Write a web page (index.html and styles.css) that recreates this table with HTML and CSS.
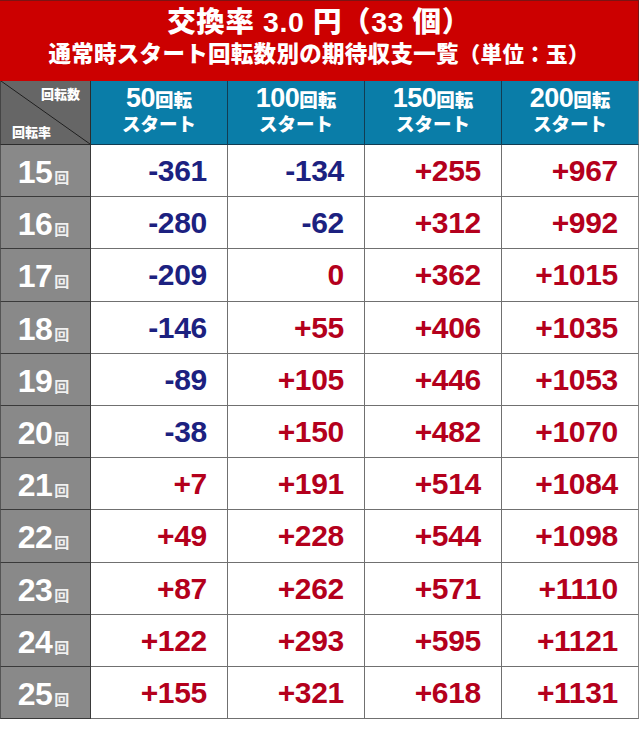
FILE: index.html
```html
<!DOCTYPE html>
<html lang="ja">
<head>
<meta charset="utf-8">
<link rel="stylesheet" href="styles.css">
</head>
<body>
<div class="board">
  <div class="title">
    <div class="t1">交換率 3.0 円（33 個）</div>
    <div class="t2">通常時スタート回転数別の期待収支一覧<span class="unit">（単位：玉）</span></div>
  </div>
  <div class="grid">
    <div class="corner"><span class="c-top">回転数</span><span class="c-bot">回転率</span></div>
    <div class="hcell"><div><span class="hn">50</span>回転</div><div>スタート</div></div>
    <div class="hcell"><div><span class="hn">100</span>回転</div><div>スタート</div></div>
    <div class="hcell"><div><span class="hn">150</span>回転</div><div>スタート</div></div>
    <div class="hcell last"><div><span class="hn">200</span>回転</div><div>スタート</div></div>

    <div class="rh"><span class="rn">15</span><span class="kai">回</span></div>
    <div class="dc neg">-361</div><div class="dc neg">-134</div><div class="dc pos">+255</div><div class="dc pos last">+967</div>

    <div class="rh"><span class="rn">16</span><span class="kai">回</span></div>
    <div class="dc neg">-280</div><div class="dc neg">-62</div><div class="dc pos">+312</div><div class="dc pos last">+992</div>

    <div class="rh"><span class="rn">17</span><span class="kai">回</span></div>
    <div class="dc neg">-209</div><div class="dc pos">0</div><div class="dc pos">+362</div><div class="dc pos last">+1015</div>

    <div class="rh"><span class="rn">18</span><span class="kai">回</span></div>
    <div class="dc neg">-146</div><div class="dc pos">+55</div><div class="dc pos">+406</div><div class="dc pos last">+1035</div>

    <div class="rh"><span class="rn">19</span><span class="kai">回</span></div>
    <div class="dc neg">-89</div><div class="dc pos">+105</div><div class="dc pos">+446</div><div class="dc pos last">+1053</div>

    <div class="rh"><span class="rn">20</span><span class="kai">回</span></div>
    <div class="dc neg">-38</div><div class="dc pos">+150</div><div class="dc pos">+482</div><div class="dc pos last">+1070</div>

    <div class="rh"><span class="rn">21</span><span class="kai">回</span></div>
    <div class="dc pos">+7</div><div class="dc pos">+191</div><div class="dc pos">+514</div><div class="dc pos last">+1084</div>

    <div class="rh"><span class="rn">22</span><span class="kai">回</span></div>
    <div class="dc pos">+49</div><div class="dc pos">+228</div><div class="dc pos">+544</div><div class="dc pos last">+1098</div>

    <div class="rh"><span class="rn">23</span><span class="kai">回</span></div>
    <div class="dc pos">+87</div><div class="dc pos">+262</div><div class="dc pos">+571</div><div class="dc pos last">+1110</div>

    <div class="rh"><span class="rn">24</span><span class="kai">回</span></div>
    <div class="dc pos">+122</div><div class="dc pos">+293</div><div class="dc pos">+595</div><div class="dc pos last">+1121</div>

    <div class="rh"><span class="rn">25</span><span class="kai">回</span></div>
    <div class="dc pos">+155</div><div class="dc pos">+321</div><div class="dc pos">+618</div><div class="dc pos last">+1131</div>
  </div>
</div>
</body>
</html>
```

FILE: styles.css
```css
html, body {
  margin: 0;
  padding: 0;
  background: #ffffff;
}
body {
  font-family: "Liberation Sans", "Noto Sans CJK JP", sans-serif;
  font-weight: 700;
}
.board {
  width: 640px;
}
.title {
  height: 81px;
  box-sizing: border-box;
  width: 639px;
  background: #cc0000;
  border-top: 1px solid #7a1414;
  border-right: 1px solid #7a1414;
  color: #ffffff;
  text-align: center;
  padding-top: 4px;
  font-weight: 900;
}
.t1 {
  font-size: 28.5px;
  line-height: 35px;
  letter-spacing: 0.6px;
}
.t2 {
  font-size: 22.5px;
  line-height: 30px;
  letter-spacing: 0.3px;
}
.unit {
  font-size: 21.5px;
}
.grid {
  display: grid;
  grid-template-columns: 91px 137px 137px 137px 137px;
  grid-template-rows: 64px repeat(11, 52.2px);
  width: 639px;
}
.grid > div {
  box-sizing: border-box;
}
.corner {
  background: linear-gradient(to top right, #666666 calc(50% - 0.8px), #1e1e1e 50%, #666666 calc(50% + 0.8px));
  border-right: 1px solid #2c2c2c;
  border-bottom: 1px solid #2c2c2c;
  border-left: 1px solid #444444;
  color: #ffffff;
  font-family: "Noto Sans CJK JP", sans-serif;
  font-weight: 900;
  font-size: 13px;
  line-height: 16px;
  display: flex;
  flex-direction: column;
  justify-content: space-between;
  padding: 5px 10px 4px 11px;
}
.c-top { align-self: flex-end; }
.c-bot { align-self: flex-start; }
.hcell {
  background: #0a7da8;
  border-right: 1px solid #123c52;
  border-bottom: 1px solid #123c52;
  color: #ffffff;
  font-family: "Liberation Sans", "Noto Sans CJK JP", sans-serif;
  font-weight: 900;
  font-size: 18.5px;
  line-height: 24px;
  text-align: center;
  display: flex;
  flex-direction: column;
  justify-content: center;
  padding-bottom: 2px;
}
.hcell .hn {
  font-size: 27px;
  font-weight: 700;
  letter-spacing: -0.5px;
}
.hcell.last {
  border-right: 1px solid #6a7c86;
}
.rh {
  background: #898989;
  border-right: 1px solid #3a3a3a;
  border-bottom: 1px solid #3a3a3a;
  border-left: 1px solid #555555;
  color: #ffffff;
  display: flex;
  align-items: baseline;
  justify-content: center;
  padding-top: 9px;
  padding-right: 4px;
}
.rn {
  font-size: 32px;
  line-height: 36px;
  letter-spacing: -0.5px;
}
.kai {
  font-family: "Noto Sans CJK JP", sans-serif;
  font-size: 15px;
  color: #f0f0f0;
  margin-left: 2px;
}
.dc {
  background: #ffffff;
  border-right: 1px solid #707070;
  border-bottom: 1px solid #707070;
  font-size: 30px;
  line-height: 36px;
  text-align: right;
  padding-right: 20px;
  padding-top: 8px;
  letter-spacing: -0.3px;
}
.dc.last {
  border-right: 1px solid #888888;
}
.neg { color: #1c2180; }
.pos { color: #b4001c; }
```
